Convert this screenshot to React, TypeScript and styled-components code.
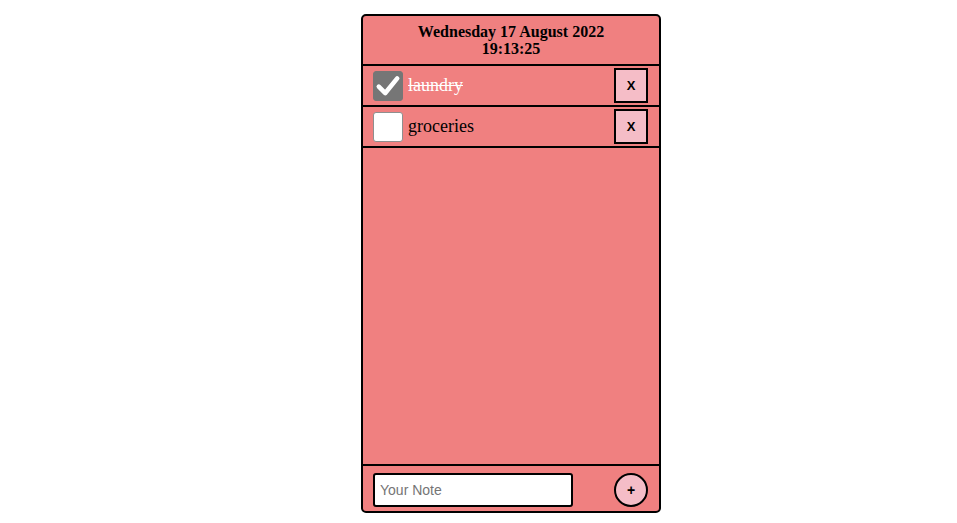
import React, { useState } from "react";
import styled, { createGlobalStyle } from "styled-components";

const Global = createGlobalStyle`
  html, body { margin: 0; padding: 0; background: #ffffff; }
  * { box-sizing: border-box; }
`;

const Page = styled.div`
  display: flex;
  justify-content: center;
  padding-top: 14px;
  padding-left: 65px;
`;

const Card = styled.div`
  width: 300px;
  height: 499px;
  border: 2px solid #000;
  border-radius: 5px;
  background: #f08080;
  display: flex;
  flex-direction: column;
  overflow: hidden;
`;

const Header = styled.div`
  border-bottom: 2px solid #000;
  padding: 7px 0 7px;
  text-align: center;
  font-family: "Liberation Serif", "Times New Roman", serif;
  font-weight: bold;
  font-size: 16px;
  line-height: 17px;
  color: #000;
`;

const List = styled.div`
  flex: 1;
  display: flex;
  flex-direction: column;
`;

const Row = styled.div`
  height: 41px;
  border-bottom: 2px solid #000;
  display: flex;
  align-items: center;
  padding: 0 11px 0 10px;
`;

const Box = styled.span<{ $checked: boolean }>`
  width: 30px;
  height: 30px;
  flex: none;
  border-radius: 3px;
  display: flex;
  align-items: center;
  justify-content: center;
  cursor: pointer;
  background: ${(p) => (p.$checked ? "#767676" : "#ffffff")};
  border: 1px solid ${(p) => (p.$checked ? "#767676" : "#8f8f8f")};
`;

const Label = styled.span<{ $done: boolean }>`
  flex: 1;
  margin-left: 5px;
  font-family: "Liberation Serif", "Times New Roman", serif;
  font-size: 18px;
  color: ${(p) => (p.$done ? "#ffffff" : "#000000")};
  text-decoration: ${(p) => (p.$done ? "line-through" : "none")};
`;

const DeleteButton = styled.button`
  width: 34px;
  height: 35px;
  border: 2px solid #000;
  background: #f5bdc7;
  font-family: "Liberation Sans", Arial, sans-serif;
  font-weight: bold;
  font-size: 13px;
  color: #000;
  padding: 0;
  display: flex;
  align-items: center;
  justify-content: center;
  cursor: pointer;
`;

const Footer = styled.div`
  border-top: 2px solid #000;
  flex: none;
  height: 47px;
  display: flex;
  align-items: center;
  justify-content: space-between;
  padding: 3px 11px 0 10px;
`;

const NoteInput = styled.input`
  width: 200px;
  height: 34px;
  border: 2px solid #000;
  border-radius: 3px;
  background: #fff;
  padding: 0 5px;
  font-family: "Liberation Sans", Arial, sans-serif;
  font-size: 14px;
  outline: none;
  &::placeholder { color: #757575; }
`;

const AddButton = styled.button`
  width: 34px;
  height: 34px;
  border-radius: 50%;
  border: 2px solid #000;
  background: #f5bdc7;
  font-family: "Liberation Sans", Arial, sans-serif;
  font-weight: bold;
  font-size: 14px;
  color: #000;
  padding: 0;
  display: flex;
  align-items: center;
  justify-content: center;
  cursor: pointer;
`;

const Check = () => (
  <svg width="26" height="26" viewBox="0 0 24 24">
    <path d="M3.5 12.5 L9.5 18.5 L20.5 5" fill="none" stroke="#fff" strokeWidth="4.2" strokeLinecap="round" strokeLinejoin="round" />
  </svg>
);

export default function App() {
  const [todos, setTodos] = useState([
    { id: 1, text: "laundry", done: true },
    { id: 2, text: "groceries", done: false },
  ]);
  const [note, setNote] = useState("");

  return (
    <>
      <Global />
      <Page>
        <Card>
          <Header>
            <div>Wednesday 17 August 2022</div>
            <div>19:13:25</div>
          </Header>
          <List>
            {todos.map((t) => (
              <Row key={t.id}>
                <Box
                  $checked={t.done}
                  onClick={() =>
                    setTodos((ts) => ts.map((x) => (x.id === t.id ? { ...x, done: !x.done } : x)))
                  }
                >
                  {t.done && <Check />}
                </Box>
                <Label $done={t.done}>{t.text}</Label>
                <DeleteButton onClick={() => setTodos((ts) => ts.filter((x) => x.id !== t.id))}>X</DeleteButton>
              </Row>
            ))}
          </List>
          <Footer>
            <NoteInput placeholder="Your Note" value={note} onChange={(e) => setNote(e.target.value)} />
            <AddButton
              onClick={() => {
                if (!note.trim()) return;
                setTodos((ts) => [...ts, { id: Date.now(), text: note, done: false }]);
                setNote("");
              }}
            >
              +
            </AddButton>
          </Footer>
        </Card>
      </Page>
    </>
  );
}
